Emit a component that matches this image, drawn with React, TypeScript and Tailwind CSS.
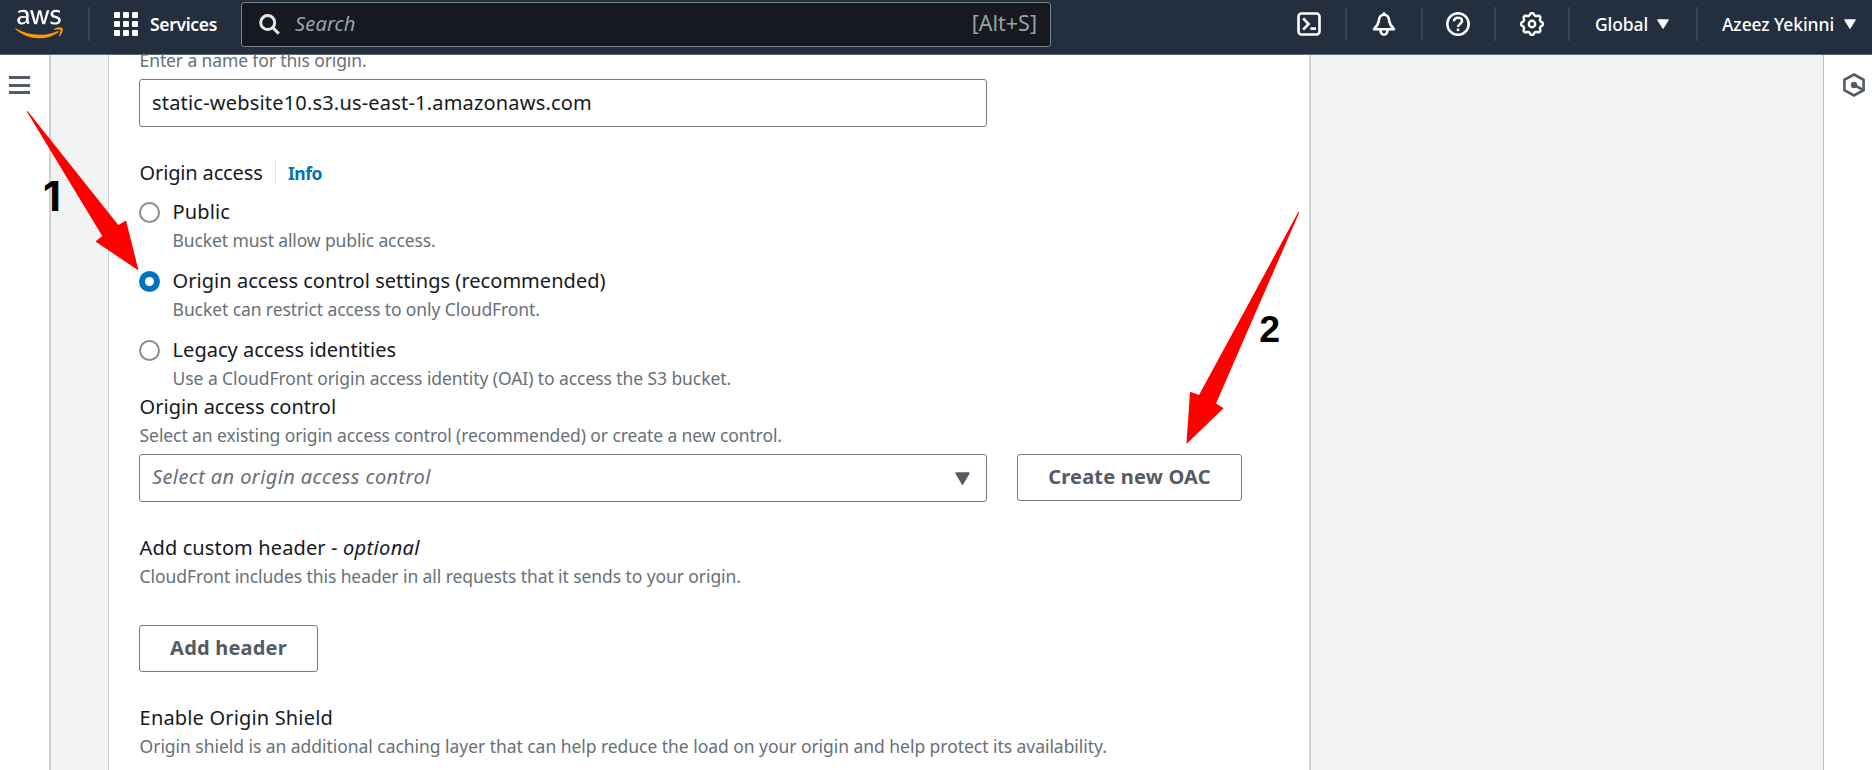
import type { ReactNode } from "react";
import { FaAws } from "react-icons/fa";

function HeaderDivider({ className = "" }: { className?: string }) {
  return <div className={`h-[34px] w-[2px] shrink-0 bg-[#3b444e] ${className}`} />;
}

function AwsLogo() {
  return (
    <div className="ml-[15px] grid w-[48px] shrink-0">
      <FaAws className="col-start-1 row-start-1 h-[38px] w-[48px] text-white [clip-path:inset(0_0_41%_0)]" />
      <FaAws className="col-start-1 row-start-1 h-[38px] w-[48px] text-[#ff9900] [clip-path:inset(59%_0_0_0)]" />
    </div>
  );
}

function AppsIcon() {
  return (
    <div className="ml-[24px] grid shrink-0 grid-cols-3 gap-[3px]">
      {[0, 1, 2, 3, 4, 5, 6, 7, 8].map((n) => (
        <span key={n} className="size-[6px] rounded-[1px] bg-white" />
      ))}
    </div>
  );
}

function SearchIcon() {
  return (
    <svg className="size-[21px] shrink-0" viewBox="0 0 21 21" fill="none" stroke="#e3e6e8" strokeWidth="3">
      <circle cx="8.7" cy="8.6" r="7" />
      <path d="M13.6 13.5L19.8 19.6" />
    </svg>
  );
}

function CloudShellIcon() {
  return (
    <svg className="size-6 shrink-0" viewBox="0 0 24 24" fill="none" stroke="white" strokeWidth="2.6">
      <rect x="1.5" y="1.5" width="21" height="21" rx="3" />
      <path d="M6.2 6.4L11.6 12L6.2 17.6" />
      <path d="M13.4 16.6h5.6" />
    </svg>
  );
}

function BellIcon() {
  return (
    <svg className="size-6 shrink-0" viewBox="0 0 24 24" fill="none" stroke="white" strokeWidth="2.5" strokeLinejoin="round">
      <path d="M12 0.3V3" />
      <path d="M2 17.2C5 14.2 6.3 12.4 6.9 8.2C7.3 4.8 9.2 2.8 12 2.8S16.7 4.8 17.1 8.2C17.7 12.4 19 14.2 22 17.2Z" />
      <path d="M8.6 17.5v1.8a3.4 3.4 0 0 0 6.8 0v-1.8" />
    </svg>
  );
}

function HelpIcon() {
  return (
    <svg className="size-6 shrink-0" viewBox="0 0 24 24" fill="none" stroke="white" strokeWidth="2.5">
      <circle cx="12" cy="12" r="10.7" />
      <path d="M7.9 9.4C8 7 9.8 5.7 12 5.7s4 1.3 4 3.4c0 2.9-4 2.9-4 6" />
      <path d="M12 16.6v2.5" />
    </svg>
  );
}

const gearPoints = Array.from({ length: 80 }, (_, i) => {
  const a = (i / 80) * Math.PI * 2;
  const wave = Math.max(-0.6, Math.min(0.6, Math.cos(a * 8)));
  const r = 9.9 + wave * 1.7;
  return `${(12 + r * Math.sin(a)).toFixed(2)},${(12 - r * Math.cos(a)).toFixed(2)}`;
}).join(" ");

function GearIcon() {
  return (
    <svg className="size-6 shrink-0" viewBox="0 0 24 24" fill="none" stroke="white" strokeWidth="2.4" strokeLinejoin="round">
      <polygon points={gearPoints} />
      <circle cx="12" cy="12" r="3.2" />
    </svg>
  );
}

function Caret({ className }: { className: string }) {
  return (
    <svg className={className} viewBox="0 0 14 12" fill="currentColor" preserveAspectRatio="none">
      <path d="M1 0.3h12a0.7 0.7 0 0 1 0.6 1.1L7.6 11.5a0.7 0.7 0 0 1-1.2 0L0.4 1.4A0.7 0.7 0 0 1 1 0.3z" />
    </svg>
  );
}

function HexIcon() {
  return (
    <svg className="h-6 w-[22px]" viewBox="0 0 22 24" fill="none" stroke="#545b64" strokeWidth="2.6">
      <path d="M11 1.5L20.6 6.8V17.2L11 22.5L1.4 17.2V6.8Z" />
      <circle cx="11" cy="12" r="3.2" fill="#545b64" stroke="none" />
      <path d="M11 12L20 16.8" />
    </svg>
  );
}

function Header() {
  return (
    <header className="z-10 flex h-[55px] shrink-0 items-start border-b border-[#5f6b78] bg-[#232f3e] text-white">
      <div className="flex h-[48px] w-full items-center">
        <AwsLogo />
        <HeaderDivider className="ml-[25px]" />
        <AppsIcon />
        <span className="ml-[12px] w-[91px] text-[17.5px] font-semibold tracking-[-0.33px]">Services</span>
        <div className="mt-[1px] flex h-[45px] w-[810px] shrink-0 items-center rounded-[3px] border border-[#76818a] bg-[#16191f] pr-[13px] pl-[17px]">
          <SearchIcon />
          <span className="ml-[15px] pb-[2px] text-[20px] tracking-[0.15px] text-[#95a5a6] italic">Search</span>
          <span className="ml-auto pb-[2px] text-[21.5px] text-[#95a5a6]">[Alt+S]</span>
        </div>
        <span className="ml-[246px] flex"><CloudShellIcon /></span>
        <HeaderDivider className="ml-[24px]" />
        <span className="ml-[25px] flex"><BellIcon /></span>
        <HeaderDivider className="ml-[25px]" />
        <span className="ml-[23px] flex"><HelpIcon /></span>
        <HeaderDivider className="ml-[24px]" />
        <span className="ml-[24px] flex"><GearIcon /></span>
        <HeaderDivider className="ml-[24px]" />
        <span className="ml-[25px] w-[62px] text-[17.5px] font-medium tracking-[-0.12px]">Global</span>
        <Caret className="h-[10px] w-[12px] shrink-0" />
        <HeaderDivider className="ml-[27px]" />
        <span className="ml-[24px] w-[122px] text-[17.5px] font-medium tracking-[-0.09px] whitespace-nowrap">Azeez Yekinni</span>
        <Caret className="h-[10px] w-[12px] shrink-0" />
      </div>
    </header>
  );
}

function Radio({ checked = false }: { checked?: boolean }) {
  return (
    <span
      className={
        checked
          ? "mt-[5px] flex size-[21px] items-center justify-center rounded-full bg-[#0073bb]"
          : "mt-[5px] size-[21px] rounded-full border-2 border-[#868d94] bg-white"
      }
    >
      {checked && <span className="size-[9px] rounded-full bg-white" />}
    </span>
  );
}

function Option({ checked, label, hint }: { checked?: boolean; label: ReactNode; hint: ReactNode }) {
  return (
    <label className="flex h-[58px] gap-[12px]">
      <Radio checked={checked} />
      <span className="flex flex-col gap-px">
        {label}
        {hint}
      </span>
    </label>
  );
}

function Title({ children, className = "" }: { children: ReactNode; className?: string }) {
  return <span className={`block h-[28px] pl-[0.6px] text-[20px] leading-[30px] whitespace-pre text-[#16191f] ${className}`}>{children}</span>;
}

function Hint({ children, className = "" }: { children: ReactNode; className?: string }) {
  return <span className={`block pl-[0.6px] text-[17.5px] leading-[28px] whitespace-nowrap text-[#687078] ${className}`}>{children}</span>;
}

function Button({ children, className }: { children: ReactNode; className: string }) {
  return (
    <button
      className={`flex h-[47px] items-center justify-center rounded-[3px] border border-[#747c84] bg-white pb-px text-[20px] font-bold text-[#545b64] ${className}`}
    >
      {children}
    </button>
  );
}

function OriginForm() {
  return (
    <main className="w-[1203px] shrink-0 overflow-hidden border-r-2 border-l border-[#cdd3d3] bg-white pl-[30px]">
      <Hint className="-mt-[9px] tracking-[-0.12px]">Enter a name for this origin.</Hint>
      <div className="mt-[5px] flex h-[48px] w-[848px] items-center rounded-[3px] border border-[#747c84] px-3 text-[20px] text-[#16191f]">
        <span className="tracking-[0.19px]">static-website10.s3.us-east-1.amazonaws.com</span>
      </div>

      <div className="mt-[31px] flex h-[28px] items-center">
        <Title className="w-[136px] tracking-[-0.15px]">Origin access</Title>
        <span className="h-[26px] w-px bg-[#e3e6e6]" />
        <span className="mt-[2px] ml-[12px] text-[17.5px] font-bold tracking-[-0.5px] text-[#0073bb]">Info</span>
      </div>

      <div className="mt-[11px] flex flex-col gap-[11px]">
        <Option
          label={<Title className="tracking-[0.1px]">Public</Title>}
          hint={<Hint className="tracking-[-0.12px]">Bucket must allow public access.</Hint>}
        />
        <Option
          checked
          label={<Title className="tracking-[0.037px]">Origin access control settings (recommended)</Title>}
          hint={<Hint className="tracking-[-0.09px]">Bucket can restrict access to only CloudFront.</Hint>}
        />
        <Option
          label={<Title className="tracking-[0.02px]">Legacy access identities</Title>}
          hint={<Hint className="tracking-[-0.078px]">Use a CloudFront origin access identity (OAI) to access the S3 bucket.</Hint>}
        />
      </div>

      <Title className="-mt-px">Origin access control</Title>
      <Hint className="mt-px tracking-[-0.095px]">
        Select an existing origin access control (recommended) or create a new control.
      </Hint>
      <div className="mt-[5px] flex items-start gap-[30px]">
        <div className="flex h-[48px] w-[848px] items-center justify-between rounded-[3px] border border-[#747c84] pr-[16px] pl-3">
          <span className="pb-[2px] text-[20px] tracking-[0.39px] text-[#687078] italic">Select an origin access control</span>
          <Caret className="h-[13px] w-[15px] text-[#545b64]" />
        </div>
        <Button className="w-[225px] tracking-[0.2px]">Create new OAC</Button>
      </div>

      <Title className="mt-[31px] tracking-[0.12px]">
        Add custom header - <i className="tracking-[0.375px]">optional</i>
      </Title>
      <Hint className="mt-px tracking-[-0.085px]">
        CloudFront includes this header in all requests that it sends to your origin.
      </Hint>
      <Button className="mt-[35px] w-[179px] tracking-[0.2px]">Add header</Button>

      <Title className="mt-[31px] tracking-[0.17px]">Enable Origin Shield</Title>
      <Hint className="mt-px tracking-[-0.044px]">
        Origin shield is an additional caching layer that can help reduce the load on your origin and help protect its
        availability.
      </Hint>
    </main>
  );
}

function Annotations() {
  return (
    <svg className="pointer-events-none absolute inset-0 z-20 h-[770px] w-[1872px]" viewBox="0 0 1872 770">
      <g fill="#ff0000">
        <polygon points="26.5,111 28,111.5 118.3,225 126,220.5 138.5,270.5 95.5,241.5 102.3,236" />
        <polygon points="1299.5,212 1298,212.5 1199,395 1190,391.7 1186.5,444 1223.5,408.2 1216,403.5" />
      </g>
      <g className="font-bold" fill="#000">
        <text className="font-['Inter',sans-serif]" x="43" y="211.3" fontSize="41.5">1</text>
        <text className="font-['Liberation_Sans',Arial,sans-serif]" x="1259.3" y="341.5" fontSize="37.5">2</text>
      </g>
    </svg>
  );
}

export default function App() {
  return (
    <div className="relative flex h-[770px] w-[1872px] flex-col overflow-hidden bg-[#f2f3f3] font-['Noto_Sans','Open_Sans',sans-serif]">
      <Header />
      <div className="flex min-h-0 flex-1 overflow-hidden">
        <aside className="w-[51px] shrink-0 border-r-2 border-[#cdd3d3] bg-white pt-[21px] pl-[8.5px]">
          <div className="flex w-[21.5px] flex-col gap-[4.5px]">
            <span className="h-[3px] bg-[#545b64]" />
            <span className="h-[3px] bg-[#545b64]" />
            <span className="h-[3px] bg-[#545b64]" />
          </div>
        </aside>
        <div className="w-[57px] shrink-0" />
        <OriginForm />
        <aside className="ml-auto w-[49px] shrink-0 border-l border-[#b9c0c0] bg-white pt-[18px] pl-[19px]">
          <HexIcon />
        </aside>
      </div>
      <Annotations />
    </div>
  );
}
